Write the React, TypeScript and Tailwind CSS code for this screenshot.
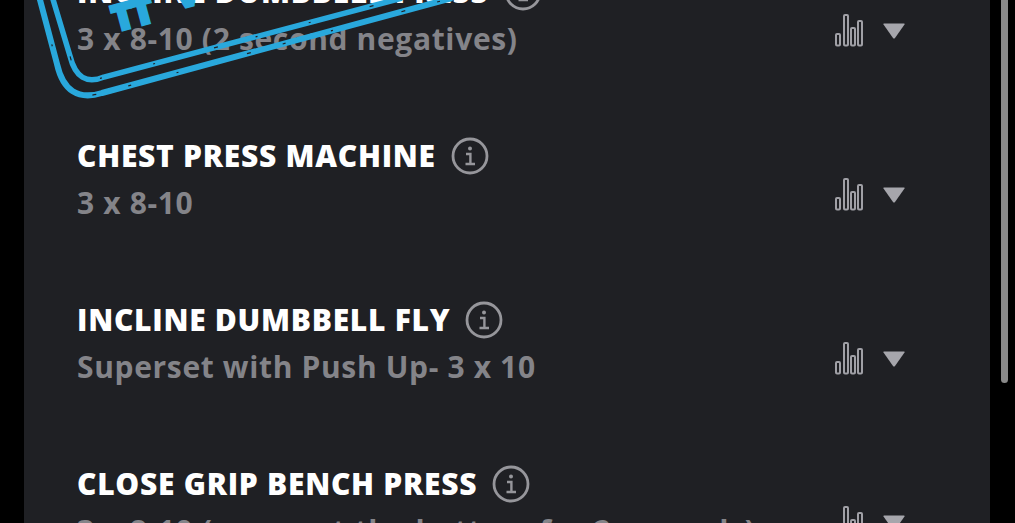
const font = { fontFamily: '"Open Sans", sans-serif' };

const exercises = [
  { name: "INCLINE DUMBBELL PRESS", sets: "3 x 8-10 (2 second negatives)" },
  { name: "CHEST PRESS MACHINE", sets: "3 x 8-10" },
  { name: "INCLINE DUMBBELL FLY", sets: "Superset with Push Up- 3 x 10" },
  { name: "CLOSE GRIP BENCH PRESS", sets: "3 x 8-10 (pause at the bottom for 2 seconds)" },
];

function InfoIcon() {
  return (
    <svg width="38" height="38" viewBox="0 0 38 38" fill="none" className="shrink-0">
      <circle cx="19" cy="19" r="17" stroke="#96969b" strokeWidth="2.8" />
      <circle cx="19" cy="11.5" r="2" fill="#96969b" />
      <path d="M15 17h4.4v10M14.5 27h9.5" stroke="#96969b" strokeWidth="2.4" />
    </svg>
  );
}

function BarsIcon() {
  return (
    <svg width="28" height="33" viewBox="0 0 28 33" fill="none" stroke="#a0a0a6" strokeWidth="2">
      <rect x="1" y="20" width="4" height="11.5" rx="1" />
      <rect x="9" y="1" width="4" height="30.5" rx="1" />
      <rect x="16" y="14" width="4" height="17.5" rx="1" />
      <rect x="23" y="7" width="4" height="24.5" rx="1" />
    </svg>
  );
}

function Caret() {
  return (
    <svg width="22" height="16" viewBox="0 0 22 16" fill="#a6a6ac">
      <path d="M1 0.5h20q1 0 .5 1L12 15q-1 1-2 0L.5 1.5q-.5-1 .5-1z" />
    </svg>
  );
}

function Row({ name, sets }: { name: string; sets: string }) {
  return (
    <div className="flex h-[164px] items-start pl-[53px] pr-[85px]" style={font}>
      <div className="min-w-0 flex-1">
        <div className="flex h-[48px] items-center gap-[15px]">
          <span className="text-[30px] font-extrabold tracking-[0.72px] leading-none whitespace-nowrap text-white">{name}</span>
          <InfoIcon />
        </div>
        <div className="text-[30px] leading-[46px] font-bold tracking-[0.65px] whitespace-nowrap text-[#848489]">{sets}</div>
      </div>
      <div className="mt-[46px] flex items-start gap-[20px]">
        <BarsIcon />
        <div className="mt-[9px]">
          <Caret />
        </div>
      </div>
    </div>
  );
}

export default function App() {
  return (
    <div className="relative h-[523px] w-[1015px] overflow-hidden bg-black">
      <div className="relative ml-[24px] h-full w-[966px] overflow-hidden bg-[#1f2024]">
        <div className="mt-[-32px]">
          {exercises.map((e) => (
            <Row key={e.name} name={e.name} sets={e.sets} />
          ))}
        </div>
        {/* stamp overlay */}
        <span
          className="absolute left-[88px] top-[-4px] -rotate-[15deg] text-[36px] leading-none font-extrabold tracking-[-1px] text-[#29a8dc] [-webkit-text-stroke:3px_#29a8dc]"
          style={font}
        >
          TT
        </span>
        <span
          className="absolute left-[150px] top-[-24px] -rotate-[15deg] text-[36px] leading-none font-extrabold text-[#29a8dc] [-webkit-text-stroke:2px_#29a8dc]"
          style={font}
        >
          V
        </span>
        <svg width="500" height="100" viewBox="0 0 500 100" fill="none" className="absolute left-[-24px] top-0">
          <path d="M39 -4L57 64Q66 104 102 93L452 -2" stroke="#29a8dc" strokeWidth="6" />
          <path d="M52 -4L70 56Q78 88 104 77L402 -2" stroke="#29a8dc" strokeWidth="5.5" />
          <path d="M39 -4L57 64Q66 104 102 93L452 -2" stroke="#1f2024" strokeWidth="1.2" strokeDasharray="3 47 2 71 4 33" />
          <path d="M52 -4L70 56Q78 88 104 77L402 -2" stroke="#1f2024" strokeWidth="1.2" strokeDasharray="2 61 4 39 2 53" />
        </svg>
      </div>
      <div className="absolute left-[1001px] top-0 h-[383px] w-[7px] rounded-b-full bg-[#8a8a8a]" />
    </div>
  );
}
